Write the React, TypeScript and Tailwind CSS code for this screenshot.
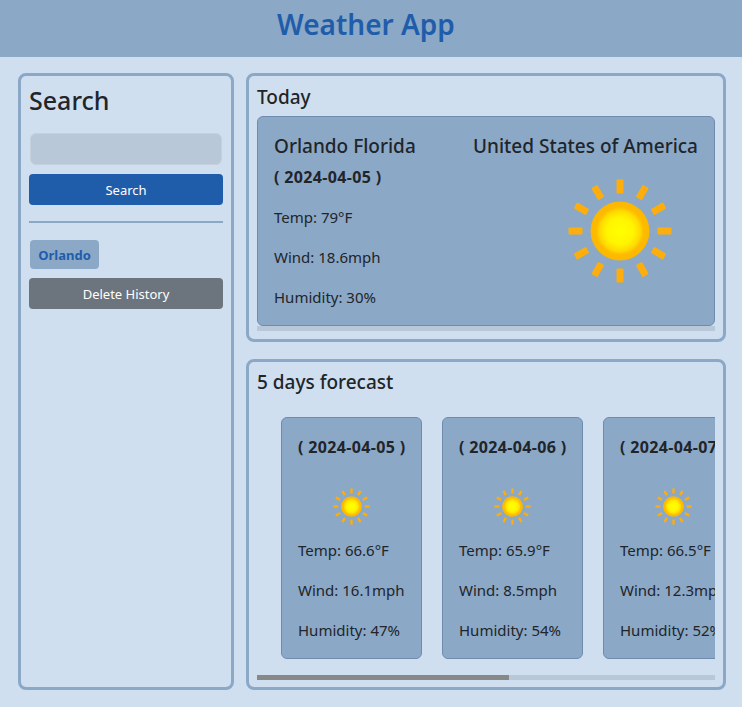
const FORECAST = [
  { date: "2024-04-05", temp: "66.6", wind: "16.1", humidity: 47 },
  { date: "2024-04-06", temp: "65.9", wind: "8.5", humidity: 54 },
  { date: "2024-04-07", temp: "66.5", wind: "12.3", humidity: 52 },
]

const RAYS = [0, 30, 60, 90, 120, 150, 180, 210, 240, 270, 300, 330]

function Sun({ id, className }: { id: string; className: string }) {
  return (
    <svg viewBox="0 0 128 128" className={className}>
      <defs>
        <radialGradient id={id}>
          <stop offset="0%" stopColor="#ffff00" />
          <stop offset="45%" stopColor="#fff500" />
          <stop offset="68%" stopColor="#ffda00" />
          <stop offset="80%" stopColor="#fdbc00" />
          <stop offset="100%" stopColor="#fdb600" />
        </radialGradient>
      </defs>
      {RAYS.map((r) => (
        <rect key={r} x="60.5" y="12.5" width="7" height="14" rx="1" fill="#fdae0c" transform={`rotate(${r} 64 64)`} />
      ))}
      <circle cx="64" cy="64" r="29.5" fill={`url(#${id})`} />
    </svg>
  )
}

export default function App() {
  return (
    <div className="h-[707px] overflow-hidden bg-[#cfdfef] font-['Noto_Sans',sans-serif] text-[#212529]">
      <header className="flex h-[57px] items-center justify-center bg-[#8ba8c7] pb-[10px] pr-[10px]">
        <h1 className="text-[28px] font-semibold text-[#1f5dab]">Weather App</h1>
      </header>
      <div className="flex gap-3 pl-[18px] pt-4">
        <aside className="h-[617px] w-[216px] rounded-lg border-[3px] border-[#8ba8c7] p-2">
          <h2 className="text-[25px] font-medium leading-[32px]">Search</h2>
          <input className="mx-px mt-[17px] block h-8 w-[192px] rounded-md border border-[#c5d0dc] bg-[#b9c8d8]" />
          <button className="mt-[9px] h-[31px] w-full rounded bg-[#1f5dab] pt-[2px] text-[13px] text-white">Search</button>
          <hr className="mt-4 border-t-2 border-[#8ba8c7]" />
          <button className="ml-px mt-[17px] block h-[29px] w-[69px] rounded-sm bg-[#8ba8c7] pt-[2px] text-[13px] font-bold text-[#1f5dab]">Orlando</button>
          <button className="mt-[9px] h-[31px] w-full rounded bg-[#6c757d] pt-[2px] text-[13px] text-white">Delete History</button>
        </aside>
        <main className="flex w-[480px] flex-col gap-[17px]">
          <section className="h-[269px] rounded-lg border-[3px] border-[#8ba8c7] px-2 pt-2">
            <h2 className="pb-[5px] text-[19px] font-medium leading-[27px]">Today</h2>
            <div className="h-[210px] rounded-md border border-[#6f8cae] bg-[#8ba8c7] px-4 pt-[14px]">
              <div className="flex justify-between">
                <h3 className="text-[19px] font-medium leading-[30px]">Orlando Florida</h3>
                <h3 className="text-[19px] font-medium leading-[30px]">United States of America</h3>
              </div>
              <div className="flex justify-between">
                <div className="mt-1 text-[15px]">
                  <h4 className="mb-4 text-[16px] font-bold leading-6 tracking-[0.35px]">( 2024-04-05 )</h4>
                  <p className="mb-4 leading-6">Temp: 79°F</p>
                  <p className="mb-4 leading-6">Wind: 18.6mph</p>
                  <p className="leading-6">Humidity: 30%</p>
                </div>
                <Sun id="sun-today" className="mr-[14px] mt-1.5 size-32" />
              </div>
            </div>
            <div className="h-[5px] bg-[#b9c8d8]" />
          </section>
          <section className="h-[331px] rounded-lg border-[3px] border-[#8ba8c7] px-2 pt-[7px]">
            <h2 className="text-[19px] font-medium leading-[27px]">5 days forecast</h2>
            <div className="mt-[21px] flex gap-5 overflow-hidden pl-6">
              {FORECAST.map((d) => (
                <div key={d.date} className="h-[242px] w-[141px] shrink-0 rounded-md border border-[#6f8cae] bg-[#8ba8c7] px-4 pt-[17px] text-[15px]">
                  <h4 className="whitespace-nowrap text-center text-[16px] font-bold leading-6 tracking-[0.35px]">( {d.date} )</h4>
                  <Sun id={`sun-${d.date}`} className="mx-auto mb-[9px] mt-[25px] size-[45px]" />
                  <p className="mb-4 whitespace-nowrap leading-6">Temp: {d.temp}°F</p>
                  <p className="mb-4 whitespace-nowrap leading-6">Wind: {d.wind}mph</p>
                  <p className="whitespace-nowrap leading-6">Humidity: {d.humidity}%</p>
                </div>
              ))}
            </div>
            <div className="mt-4 h-[5px] bg-[#b9c8d8]">
              <div className="h-full w-[252px] bg-[#888888]" />
            </div>
          </section>
        </main>
      </div>
    </div>
  )
}
